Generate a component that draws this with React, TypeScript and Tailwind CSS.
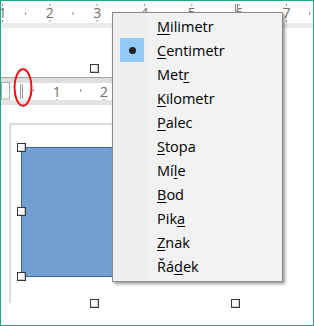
import React from "react";

type Item = { pre?: string; u: string; post?: string; checked?: boolean };

const items: Item[] = [
  { u: "M", post: "ilimetr" },
  { u: "C", post: "entimetr", checked: true },
  { pre: "Met", u: "r" },
  { u: "K", post: "ilometr" },
  { u: "P", post: "alec" },
  { u: "S", post: "topa" },
  { pre: "Mí", u: "l", post: "e" },
  { u: "B", post: "od" },
  { pre: "Pik", u: "a" },
  { u: "Z", post: "nak" },
  { pre: "Řá", u: "d", post: "ek" },
];

const U = 47.33;

function TopRuler() {
  const nums = [1, 2, 3, 4, 5, 6, 7];
  return (
    <svg width="312" height="22" className="block" style={{ fontFamily: "'Open Sans', sans-serif" }}>
      {nums.map((n) => {
        const x = 1.5 + U * (n - 1);
        return (
          <g key={n}>
            <text x={x} y={16.7} fontSize="14" fill="#6e6e6e" textAnchor="middle">
              {n}
            </text>
            <rect x={x - 0.5} y={3} width={1} height={2} fill="#8a8a8a" />
            <rect x={x - 0.5} y={19} width={1} height={2} fill="#8a8a8a" />
          </g>
        );
      })}
      {nums.map((n) => {
        const x = 24.67 + U * (n - 1);
        return <rect key={"t" + n} x={x - 0.5} y={11} width={1} height={3} fill="#8a8a8a" />;
      })}
      <rect x={234} y={3} width={1} height={8} fill="#8a8a8a" />
      <rect x={236} y={3} width={1} height={8} fill="#8a8a8a" />
    </svg>
  );
}

function SecondRuler() {
  const nums = [1, 2, 3];
  return (
    <svg width="200" height="28" className="block" style={{ fontFamily: "'Open Sans', sans-serif" }}>
      <rect x={0} y={0} width={200} height={1} fill="#a3a3a3" />
      <rect x={0} y={1} width={200} height={5} fill="#dedede" />
      <rect x={0} y={6} width={200} height={17} fill="#ffffff" />
      <rect x={0} y={23} width={200} height={5} fill="#e4e4e4" />
      <rect x={0.5} y={5.5} width={8} height={16.5} fill="#ffffff" stroke="#a8a8a8" />
      <rect x={19} y={7} width={1} height={15} fill="#9a9a9a" />
      <rect x={21} y={7} width={1} height={15} fill="#9a9a9a" />
      {nums.map((n) => {
        const x = 55.7 + U * (n - 1);
        return (
          <g key={n}>
            <text x={x} y={19.7} fontSize="14" fill="#6e6e6e" textAnchor="middle">
              {n}
            </text>
            <rect x={x - 0.5} y={22} width={1} height={1} fill="#8a8a8a" />
          </g>
        );
      })}
      {[1, 2, 3, 4].map((n) => {
        const x = 32.3 + U * (n - 1);
        return <rect key={"t" + n} x={x - 0.5} y={12} width={1} height={3} fill="#8a8a8a" />;
      })}
    </svg>
  );
}

function Handle({ className }: { className: string }) {
  return (
    <div
      className={
        "absolute w-[9px] h-[9px] border border-[#3a3a3a] bg-[#f7f7f7] shadow-[inset_-1px_-1px_0_#c8c8c8] " +
        className
      }
    />
  );
}

export default function App() {
  return (
    <div className="relative w-[314px] h-[326px] border border-[#19a889] bg-white overflow-hidden flex flex-col">
      <TopRuler />
      <div className="h-[5px] bg-[#ebebeb]" />
      <div className="h-[49px]" />
      <SecondRuler />
      <div className="flex-1">
        <div className="ml-[8px] mt-[18px] w-[220px] h-[180px] border-l-2 border-t-2 border-[#dcdcdc]">
          <div className="ml-[10px] mt-[22px] w-[180px] h-[130px] bg-[#729fcf] border border-[#3465a4]" />
        </div>
      </div>

      <Handle className="left-[89px] top-[63px]" />
      <Handle className="left-[16px] top-[142px]" />
      <Handle className="left-[16px] top-[206px]" />
      <Handle className="left-[16px] top-[271px]" />
      <Handle className="left-[89px] top-[298px]" />
      <Handle className="left-[230px] top-[298px]" />

      <svg className="absolute left-[12px] top-[67px]" width="20" height="40">
        <ellipse cx="10" cy="19.5" rx="8.5" ry="18.3" fill="none" stroke="#ee1111" strokeWidth="2" />
      </svg>

      <div
        className="absolute left-[111px] top-[11px] w-[171px] h-[270px] border border-[#8a8a8a] bg-[#f2f2f2] shadow-[2px_2px_3px_rgba(0,0,0,0.4)] pt-[1px] flex"
        style={{ fontFamily: "'Open Sans', sans-serif" }}
      >
        <div className="absolute left-0 top-0 bottom-0 w-[34px] bg-[#efefef]" />
        <div className="relative flex flex-col w-full">
          {items.map((it, i) => (
            <div key={i} className="h-[24px] flex items-center">
              <div className="w-[44px] h-[24px] pl-[7px] flex items-center shrink-0">
                {it.checked && (
                  <div className="w-[24px] h-[24px] bg-[#91c9f7] flex items-center justify-center">
                    <div className="w-[7px] h-[7px] rounded-full bg-[#1e1e1e]" />
                  </div>
                )}
              </div>
              <span className="text-[14.5px] leading-[24px] text-black pt-[1px]">
                {it.pre}
                <span className="underline underline-offset-[2px]">{it.u}</span>
                {it.post}
              </span>
            </div>
          ))}
        </div>
      </div>
    </div>
  );
}
